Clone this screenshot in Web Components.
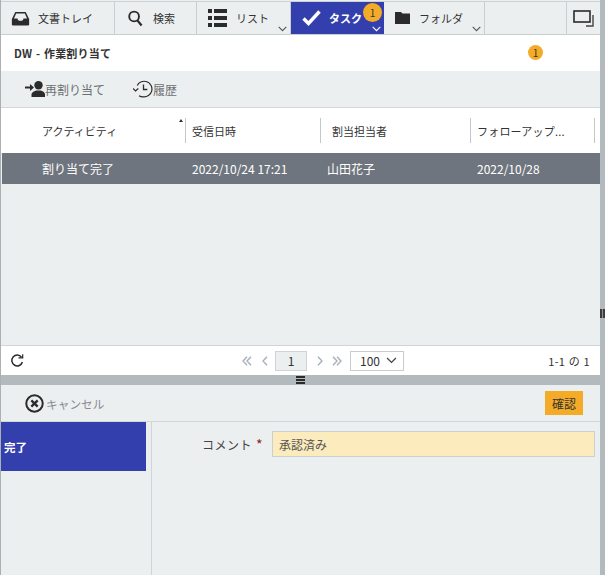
<!DOCTYPE html>
<html lang="ja"><head><meta charset="utf-8">
<style>
html,body{margin:0;padding:0;height:575px;overflow:hidden;background:#eceff0;font-family:"Noto Sans CJK JP","Liberation Sans",sans-serif;color:#333}
</style></head><body>
<app-shell>
  <top-nav slot="nav">
    <nav-tab w="114" pad="10" iw="27" label="文書トレイ" icon="tray"></nav-tab>
    <nav-tab w="82" pad="13" iw="25" label="検索" icon="search"></nav-tab>
    <nav-tab w="94" pad="11" iw="28" label="リスト" icon="list" menu></nav-tab>
    <nav-tab w="93" pad="11" iw="27" label="タスク" icon="check" menu active badge="1"></nav-tab>
    <nav-tab w="101" pad="11" iw="24" label="フォルダ" icon="folder" menu></nav-tab>
    <nav-tab w="82" label=""></nav-tab>
    <nav-tab grow label="" icon="window"></nav-tab>
  </top-nav>
  <title-bar slot="title"></title-bar>
  <action-bar slot="actions"></action-bar>
  <task-grid slot="grid"></task-grid>
  <pager-bar slot="pager"></pager-bar>
  <split-bar slot="split"></split-bar>
  <confirm-bar slot="confirm"></confirm-bar>
  <form-pane slot="form"></form-pane>
</app-shell>
<script>
const ICONS={
tray:'<svg width="19" height="15" viewBox="0 0 22 17" preserveAspectRatio="none"><path d="M5 1h12l4 8v6a1.5 1.5 0 0 1-1.5 1.5h-17A1.5 1.5 0 0 1 1 15V9z" fill="#2b2b2b"/><path d="M6 2.8h10l2.6 5.6H14.4a3.4 2.6 0 0 1-6.8 0H3.4z" fill="#eceff0"/></svg>',
search:'<svg width="15" height="17" viewBox="0 0 16 18"><circle cx="6.5" cy="6.8" r="5.2" fill="none" stroke="#2b2b2b" stroke-width="2"/><path d="M10 11l4.5 5.5" stroke="#2b2b2b" stroke-width="2.4"/></svg>',
list:'<svg width="19" height="18" viewBox="0 0 19 18" fill="#2b2b2b"><rect x="0" y="0" width="4" height="4"/><rect x="6" y="0" width="13" height="4"/><rect x="0" y="7" width="4" height="4"/><rect x="6" y="7" width="13" height="4"/><rect x="0" y="14" width="4" height="4"/><rect x="6" y="14" width="13" height="4"/></svg>',
check:'<svg width="19" height="16" viewBox="0 0 19 16"><path d="M1.5 8.5l5 5L17.5 1.5" fill="none" stroke="#fff" stroke-width="3.4"/></svg>',
folder:'<svg width="15" height="12" viewBox="0 0 15 12"><path d="M0 0h6l1.5 1.5H15V12H0z" fill="#2b2b2b"/></svg>',
window:'<svg width="21" height="17" viewBox="0 0 21 17" fill="none" stroke="#2b2b2b"><rect x="1" y="1" width="16" height="11" stroke-width="1.6"/><path d="M20 5v11h-7" stroke-width="1.4" stroke="#444"/></svg>'
};
function def(name,html,init){customElements.define(name,class extends HTMLElement{connectedCallback(){if(this.shadowRoot)return;const r=this.attachShadow({mode:'open'});r.innerHTML=typeof html==='function'?html(this):html;init&&init(r,this);}});}
const chev=(c='#555')=>`<svg width="9" height="6" viewBox="0 0 9 6"><path d="M.7.8l3.8 3.8L8.3.8" fill="none" stroke="${c}" stroke-width="1.1"/></svg>`;

def('app-shell',`<style>
:host{display:grid;grid-template-columns:600px 5px;height:575px}
.main{display:flex;flex-direction:column;height:575px;min-width:0;border-left:1px solid #aab0b3;box-sizing:border-box}
.strip{background:#b3babd;display:flex;align-items:flex-start}
.strip i{display:block;width:5px;height:9px;margin-top:309px;background:repeating-linear-gradient(90deg,#3a3d40 0 2px,#9a8f7c 2px 3px)}
</style><div class="main"><slot name="nav"></slot><slot name="title"></slot><slot name="actions"></slot><slot name="grid"></slot><slot name="pager"></slot><slot name="split"></slot><slot name="confirm"></slot><slot name="form"></slot></div><div class="strip"><i></i></div>`);

def('top-nav',`<style>:host{display:flex;height:32px;margin-top:1px;border-top:1px solid #ccd1d3;border-bottom:1px solid #c9ced0;background:#eceff0;flex:none}</style><slot></slot>`);

def('nav-tab',h=>{
 const a=h.hasAttribute('active'),w=h.getAttribute('w'),ic=h.getAttribute('icon'),grow=h.hasAttribute('grow');
 const pad=h.getAttribute('pad')||0,iw=h.getAttribute('iw')||0;
 return `<style>
 :host{display:flex;align-items:center;box-sizing:border-box;${grow?'flex:1;justify-content:center;':`width:${w}px;flex:none;`}position:relative;${grow?'':'border-right:1px solid #c9ced0;'}${a?'background:#343fae;border-right:0;font-weight:700;':''}font-size:11px;color:${a?'#fff':'#333'}}
 .ic{display:flex;box-sizing:border-box;${grow?'':`width:${iw}px;margin-left:${pad}px;`}}
 .badge{position:absolute;right:2px;top:1px;width:19px;height:19px;border-radius:50%;background:#f4ab27;color:#333;font-size:10px;font-weight:400;display:flex;align-items:center;justify-content:center}
 .chev{position:absolute;right:3px;bottom:2px;display:flex}
 </style>${ic?`<span class="ic">${ICONS[ic]}</span>`:''}<span>${h.getAttribute('label')}</span>${h.hasAttribute('badge')?`<span class="badge">${h.getAttribute('badge')}</span>`:''}${h.hasAttribute('menu')?`<span class="chev">${chev(a?'#fff':'#555')}</span>`:''}`;
});

def('title-bar',`<style>:host{display:flex;align-items:center;height:36px;background:#fff;flex:none;position:relative;padding-left:13px;font-size:11px;font-weight:700;color:#333;letter-spacing:.2px;word-spacing:1px}
.b{position:absolute;left:527px;top:10px;width:15px;height:15px;border-radius:50%;background:#f4ab27;color:#333;font-size:10px;font-weight:400;display:flex;align-items:center;justify-content:center}</style>DW - 作業割り当て<span class="b">1</span>`);

def('action-bar',`<style>:host{display:flex;align-items:center;gap:28px;height:36px;padding:0 0 0 24px;background:#eceff0;border-bottom:1px solid #d3d7d9;flex:none;font-size:12px;color:#6b6f73}
.a{display:flex;align-items:center}</style>
<span class="a"><svg width="20" height="16" viewBox="0 0 20 16" fill="#2b2b2b"><path d="M0 5.5h5V3l4 3.5L5 10V7.5H0z"/><circle cx="13.5" cy="4.2" r="4.2"/><path d="M6.5 16v-2.4c0-2.6 3-3.6 4.8-4.2h4.4c1.800.6 4.300 1.600 4.300 4.200V16z"/></svg>再割り当て</span>
<span class="a"><svg width="20" height="18" viewBox="0 0 20 18" fill="none" stroke="#2b2b2b" stroke-width="1.2"><path d="M4.200 5.500A7.800 7.800 0 1 1 10 16.800a7.800 7.800 0 0 1-4-1.100"/><path d="M0 8.500l2.500 2.500 2.800-2.500" /><path d="M10.500 4.500v5h3.800" stroke-width="1.300"/></svg>履歴</span>`);

def('task-grid',`<style>:host{display:flex;flex-direction:column;flex:1;min-height:0;background:#eceff0;font-size:11px;border-bottom:1px solid #d0d4d6}
.head{display:grid;grid-template-columns:185px 135px 150px 124px 5px;height:45px;background:#fff;align-items:center;flex:none}
.head div{box-sizing:border-box;height:25px;display:flex;align-items:center;border-right:1px solid #c4c8ca;color:#333;position:relative;white-space:nowrap;overflow:hidden}
.head div:first-child{padding-left:41px}
.head div:nth-child(2){padding-left:6px}
.head div:nth-child(3){padding-left:11px}
.head div:nth-child(4){padding-left:6px;letter-spacing:.2px}
.head div:last-child{border:0}
.sort{position:absolute;right:2px;top:1px;width:0;height:0;border:2.500px solid transparent;border-bottom:3px solid #333;border-top:0}
.row{display:grid;grid-template-columns:184px 135px 150px 124px 5px;height:31px;background:#6f757e;color:#fff;align-items:center;margin-left:1px;flex:none;font-size:12px}
.row span:first-child{padding-left:40px}
.row span:nth-child(2){padding-left:6px}
.row span:nth-child(3){padding-left:6px}
.row span:nth-child(4){padding-left:6px}
</style><div class="head"><div>アクティビティ<i class="sort"></i></div><div>受信日時</div><div>割当担当者</div><div>フォローアップ...</div><div></div></div>
<div class="row"><span>割り当て完了</span><span>2022/10/24 17:21</span><span>山田花子</span><span>2022/10/28</span><span></span></div>`);

def('pager-bar',`<style>:host{display:flex;align-items:center;height:29px;background:#fff;flex:none;font-size:12px;color:#333}
.l{width:241px;padding-left:9px;box-sizing:border-box;display:flex}.c{display:flex;align-items:center;color:#9aa3ab}
.p{box-sizing:border-box;width:32px;height:20px;background:#eceff0;border:1px solid #d0d4d6;color:#333;display:flex;align-items:center;justify-content:center;margin:0 10px 0 7px}
.n{display:flex;align-items:center}
.sel{box-sizing:border-box;width:54px;height:20px;border:1px solid #c8cccd;margin-left:8px;display:flex;align-items:center;justify-content:space-between;padding:0 6px 0 9px;color:#333}
.r{margin-left:auto;padding-right:10px;font-size:11px;letter-spacing:.4px;word-spacing:.5px}</style>
<div class="l"><svg width="14" height="14" viewBox="0 0 14 14" fill="none" stroke="#2b2b2b" stroke-width="1.500"><path d="M11.500 3.200A5.400 5.400 0 1 0 12.400 8"/><path d="M8.500 3.800h4.200V.2" stroke-width="1.200" /></svg></div>
<div class="c"><span class="n"><svg width="26" height="10" viewBox="0 0 26 10" fill="none" stroke="#a4adb5" stroke-width="1.300"><path d="M5 .8L1 5l4 4.200M9 .8L5 5l4 4.200M25 .8L21 5l4 4.200"/></svg></span><span class="p">1</span><span class="n"><svg width="25" height="10" viewBox="0 0 25 10" fill="none" stroke="#a4adb5" stroke-width="1.300"><path d="M1 .8L5 5 1 9.200M16 .8L20 5l-4 4.200M20 .8L24 5l-4 4.200"/></svg></span>
<span class="sel">100${chev('#444').replace('width="9"','width="11"').replace('height="6"','height="7"')}</span></div>
<div class="r">1-1 の 1</div>`);

def('split-bar',`<style>:host{display:flex;height:10px;background:#b3babd;align-items:center;justify-content:center;flex:none;padding-right:1px}
svg{display:block}</style><svg width="9" height="8" viewBox="0 0 9 8" fill="#2b2b2b"><rect width="9" height="2"/><rect y="3" width="9" height="2"/><rect y="6" width="9" height="2"/></svg>`);

def('confirm-bar',`<style>:host{display:flex;align-items:center;justify-content:space-between;height:36px;background:#eceff0;border-bottom:1px solid #d3d7d9;flex:none;padding:0 17px 0 24px;font-size:11.700px;color:#888c90}
.a{display:flex;align-items:center;gap:2px}
.b{width:38px;height:24px;background:#f4ab27;color:#333;display:flex;align-items:center;justify-content:center;font-size:12px}</style>
<span class="a"><svg width="19" height="19" viewBox="0 0 18 18"><circle cx="9" cy="9" r="7.800" fill="none" stroke="#2b2b2b" stroke-width="1.900"/><path d="M6 6l6 6M12 6l-6 6" stroke="#2b2b2b" stroke-width="2.200"/></svg>キャンセル</span><span class="b">確認</span>`);

def('form-pane',`<style>:host{display:grid;grid-template-columns:151px 1fr;flex:none;height:153px;background:#eceff0;font-size:12px}
.side{border-right:1px solid #d0d4d6}
.act{height:49px;width:145px;background:#343fae;color:#fff;font-weight:700;font-size:11.500px;display:flex;align-items:center;padding-left:3px;box-sizing:border-box}
.f{display:flex;align-items:flex-start;padding:9px 5px 0 0}
label{width:120px;box-sizing:border-box;height:26px;display:flex;align-items:center;justify-content:flex-end;padding-right:9px;color:#444;font-size:12px;letter-spacing:.5px}
label b{color:#8a1f1f;font-weight:400;margin-left:4px;font-size:14px}
.in{flex:1;height:26px;box-sizing:border-box;background:#fcebbd;border:1px solid #c9d0d3;display:flex;align-items:center;padding-left:6px;color:#555;font-size:12px}</style>
<div class="side"><div class="act">完了</div></div><div class="f"><label>コメント<b>*</b></label><div class="in">承認済み</div></div>`);
</script></body></html>
